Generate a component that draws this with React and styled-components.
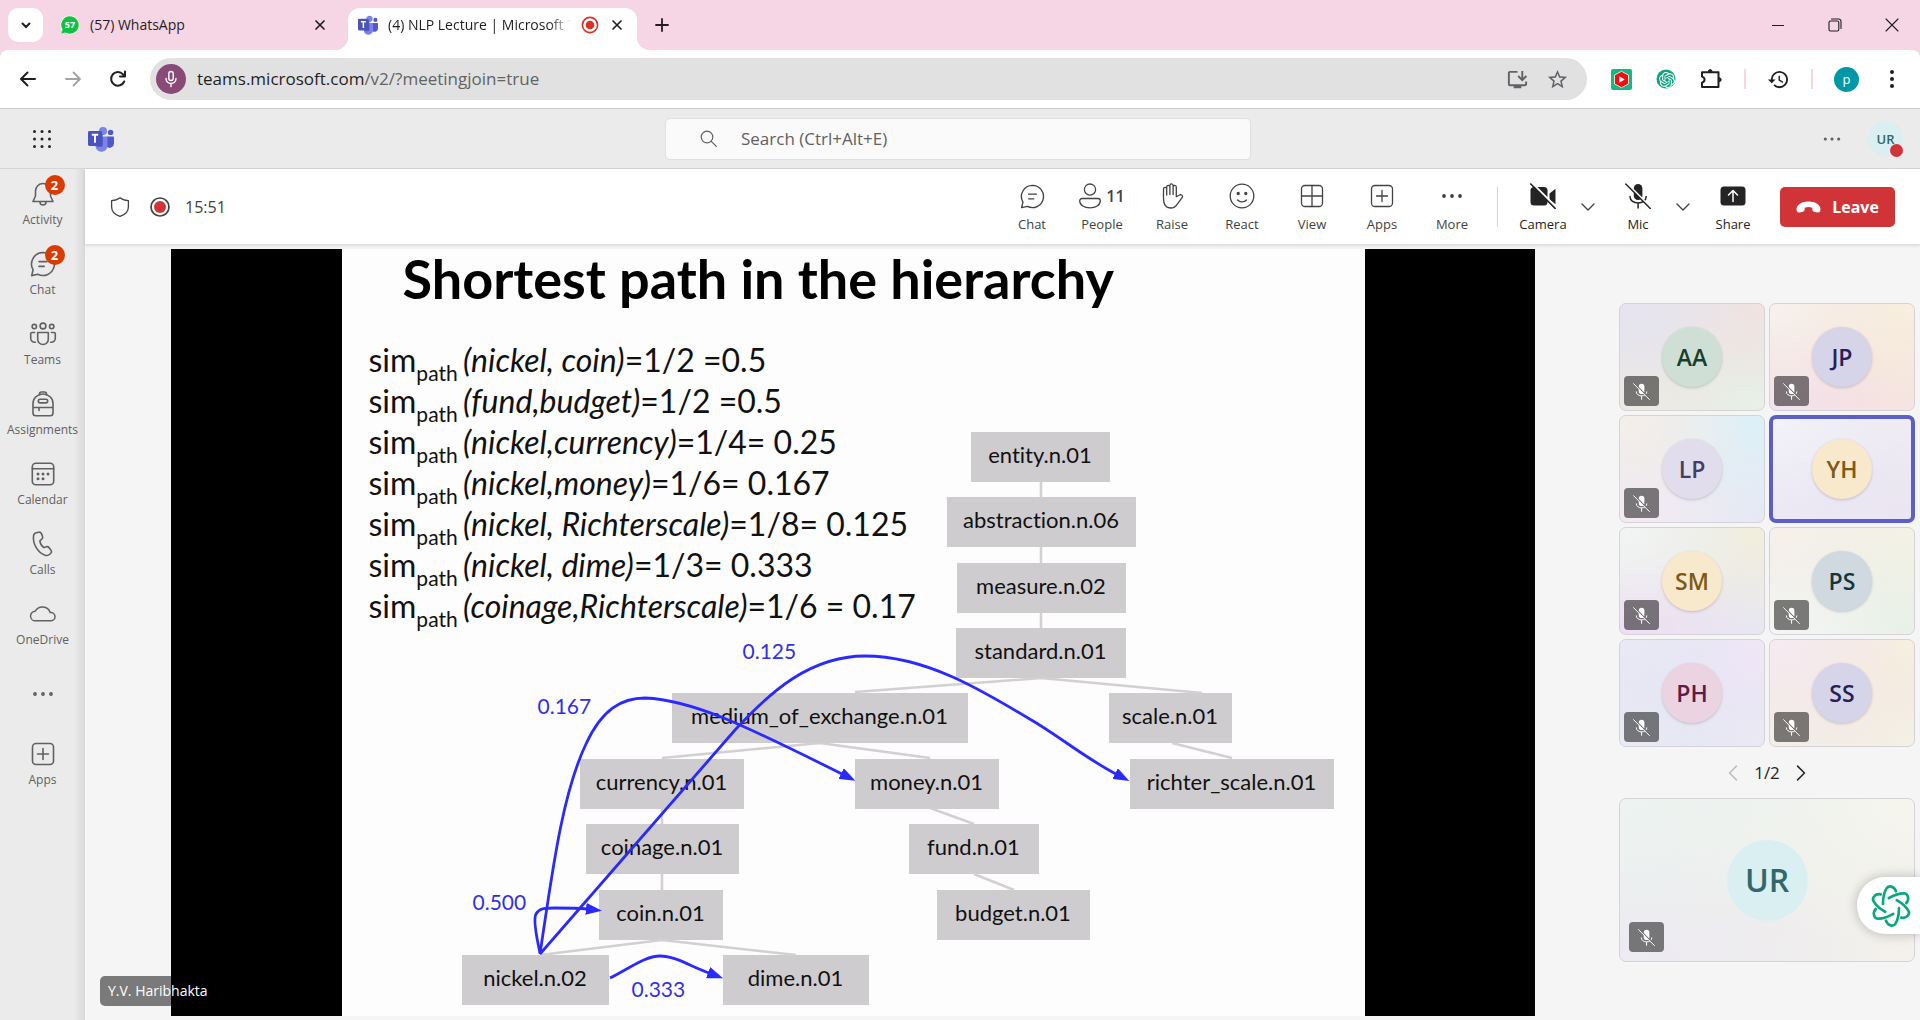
import React from 'react';
import styled, { createGlobalStyle, css } from 'styled-components';
import { SiOpenai } from 'react-icons/si';
import { MdOutlineInstallDesktop, MdStarBorder, MdHistory } from 'react-icons/md';

const GlobalStyle = createGlobalStyle`
  *, *::before, *::after { box-sizing: border-box; }
  body {
    margin: 0;
    background: #f5f5f5;
    font-family: 'Open Sans', 'Noto Sans', sans-serif;
    color: #242424;
  }
  button {
    font: inherit;
    color: inherit;
    border: 0;
    padding: 0;
    background: none;
    display: inline-flex;
    align-items: center;
    justify-content: center;
  }
  svg { display: block; flex: none; }
`;

const Page = styled.div`
  display: flex;
  flex-direction: column;
  height: 100vh;
  overflow: hidden;
`;

/* ---------- browser chrome ---------- */

const TabStrip = styled.header`
  display: flex;
  align-items: flex-end;
  height: 50px;
  padding-left: 8px;
  background: #f6d5e4;
  color: #1f1f1f;
`;

const TabSearch = styled.button`
  width: 35px;
  height: 34px;
  margin: 0 7px 8px 0;
  border-radius: 10px;
  background: #fff;
`;

const Tab = styled.div`
  position: relative;
  display: flex;
  align-items: center;
  gap: 10px;
  height: 42px;
  width: ${(p) => (p.$active ? 289 : 298)}px;
  padding: 0 ${(p) => (p.$active ? 12 : 20)}px 8px 10px;
  ${(p) =>
    p.$active &&
    css`
      background: #fff;
      border-radius: 12px 12px 0 0;
      &::before,
      &::after {
        content: '';
        position: absolute;
        bottom: 0;
        width: 14px;
        height: 14px;
      }
      &::before {
        left: -14px;
        background: radial-gradient(circle at 0 0, transparent 14px, #fff 15px);
      }
      &::after {
        right: -14px;
        background: radial-gradient(circle at 100% 0, transparent 14px, #fff 15px);
      }
    `}
`;

const TabTitle = styled.span`
  flex: 1;
  min-width: 0;
  overflow: hidden;
  white-space: nowrap;
  font-size: 14px;
  line-height: 20px;
  ${(p) => p.$fade && css`mask-image: linear-gradient(to right, #000 88%, transparent);`}
`;

const SmallButton = styled.button`
  width: 16px;
  height: 16px;
`;

const NewTab = styled.button`
  width: 34px;
  height: 34px;
  margin: 0 0 8px 8px;
`;

const WindowControls = styled.div`
  display: flex;
  align-self: stretch;
  margin-left: auto;
`;

const WindowButton = styled.button`
  width: 57px;
`;

const ToolbarBack = styled.div`
  background: #f6d5e4;
`;

const Toolbar = styled.div`
  display: flex;
  align-items: center;
  height: 59px;
  padding: 0 20px 0 12px;
  background: #fff;
  border-bottom: 1px solid #cbcbcb;
  border-radius: 8px 8px 0 0;
  color: #1f1f1f;
`;

const NavButton = styled.button`
  width: 32px;
  height: 32px;
  margin-right: 13px;
  color: ${(p) => (p.$muted ? '#a3a3a3' : '#1f1f1f')};
`;

const Omnibox = styled.div`
  display: flex;
  align-items: center;
  flex: 1;
  height: 42px;
  margin-left: 3px;
  padding: 0 18px 0 6px;
  border-radius: 21px;
  background: #e1e1e1;
  color: #5f6368;
`;

const MicChip = styled.button`
  width: 30px;
  height: 30px;
  margin-right: 11px;
  border-radius: 50%;
  background: #8a4a78;
  color: #fff;
`;

const Address = styled.div`
  flex: 1;
  font-size: 17px;
  line-height: 24px;
  color: #636363;
  b {
    font-weight: 400;
    color: #1f1f1f;
  }
`;

const OmniButton = styled.button`
  width: 24px;
  height: 24px;
  margin-left: 16px;
`;

const Extensions = styled.div`
  display: flex;
  align-items: center;
  padding-left: 22px;
`;

const ExtButton = styled.button`
  width: 24px;
  height: 24px;
  margin-right: 21px;
`;

const ToolbarRule = styled.span`
  width: 2px;
  height: 20px;
  margin-right: ${(p) => p.$gap}px;
  background: #f6d5e4;
`;

const ProfileDot = styled.button`
  width: 25px;
  height: 25px;
  margin-right: 25px;
  border-radius: 50%;
  background: #0097a7;
  color: #fff;
  font-size: 13px;
  line-height: 16px;
`;

/* ---------- teams header ---------- */

const AppHeader = styled.div`
  display: grid;
  grid-template-columns: 1fr 586px 1fr;
  align-items: center;
  height: 60px;
  padding: 0 17px 0 13px;
  background: #ebebeb;
  border-bottom: 1px solid #d6d6d6;
`;

const HeaderSide = styled.div`
  display: flex;
  align-items: center;
  gap: ${(p) => (p.$end ? 24 : 34)}px;
  padding-left: ${(p) => (p.$end ? 0 : 17)}px;
  justify-content: ${(p) => (p.$end ? 'flex-end' : 'flex-start')};
`;

const HeaderButton = styled.button`
  width: 24px;
  height: 24px;
  color: #616161;
`;

const SearchBox = styled.label`
  display: flex;
  align-items: center;
  gap: 24px;
  height: 42px;
  padding: 0 34px;
  border: 1px solid #e0e0e0;
  border-radius: 5px;
  background: #fafafa;
  color: #616161;
`;

const SearchInput = styled.input`
  flex: 1;
  min-width: 0;
  border: 0;
  padding: 0;
  background: none;
  outline: none;
  font: 17px/24px 'Open Sans', 'Noto Sans', sans-serif;
  &::placeholder { color: #616161; opacity: 1; }
`;

const Me = styled.button`
  position: relative;
  width: 35px;
  height: 35px;
  border-radius: 50%;
  background: #d9eff2;
  color: #33676a;
  font-size: 13px;
  font-weight: 600;
  &::after {
    content: '';
    position: absolute;
    right: 0;
    bottom: -1px;
    width: 13px;
    height: 13px;
    border-radius: 50%;
    background: #d13438;
  }
`;

/* ---------- body ---------- */

const Body = styled.div`
  display: flex;
  flex: 1;
  min-height: 0;
`;

const Rail = styled.nav`
  display: flex;
  flex-direction: column;
  width: 85px;
  padding-top: 7px;
  background: linear-gradient(to right, #ebebeb 74px, #d9d9d9);
`;

const RailItem = styled.button`
  flex-direction: column;
  justify-content: ${(p) => (p.$solo ? 'center' : 'flex-start')};
  gap: 4px;
  height: 70px;
  padding: ${(p) => (p.$solo ? '0 0 14px' : '4px 0 0')};
  color: #616161;
  font-size: 12px;
  line-height: 16px;
`;

const RailIcon = styled.span`
  position: relative;
  display: flex;
  height: 28px;
  align-items: center;
`;

const Badge = styled.span`
  position: absolute;
  left: 16px;
  top: -5px;
  width: 20px;
  height: 20px;
  border-radius: 50%;
  background: #da3b01;
  color: #fff;
  font-size: 13px;
  line-height: 20px;
  font-weight: 700;
  text-align: center;
`;

const Meeting = styled.main`
  display: flex;
  flex-direction: column;
  flex: 1;
  min-width: 0;
`;

const MeetingBar = styled.div`
  display: flex;
  align-items: center;
  height: 76px;
  padding: 0 25px;
  background: #fff;
  border-bottom: 1px solid #dedede;
  box-shadow: 0 1px 3px rgba(0, 0, 0, 0.1);
  color: #424242;
`;

const Status = styled.div`
  display: flex;
  align-items: center;
  gap: 15px;
  margin-right: auto;
  font-size: 16px;
  line-height: 24px;
`;

const ShieldBox = styled.span`
  width: 25px;
`;

const BarButton = styled.button`
  flex-direction: column;
  gap: 6px;
  width: 70px;
  padding-top: 3px;
  font-size: 13px;
  line-height: 18px;
  color: ${(p) => (p.$strong ? '#242424' : '#424242')};
`;

const BarIcon = styled.span`
  display: flex;
  align-items: center;
  gap: 5px;
  height: 26px;
  font-size: 16px;
  font-weight: 600;
`;

const BarRule = styled.span`
  width: 1px;
  height: 40px;
  margin: 0 10px;
  background: #d6d6d6;
`;

const Caret = styled.button`
  width: 20px;
  height: 40px;
  margin-right: 5px;
`;

const Leave = styled.button`
  gap: 11px;
  width: 115px;
  height: 40px;
  margin-left: 12px;
  border-radius: 5px;
  background: #d13438;
  color: #fff;
  font-size: 16px;
  font-weight: 700;
`;

const Content = styled.div`
  position: relative;
  display: flex;
  flex: 1;
  min-height: 0;
`;

const Stage = styled.section`
  flex: 1;
  min-width: 0;
  padding: 4px 84px 0 86px;
`;

const SharedScreen = styled.div`
  display: flex;
  justify-content: center;
  aspect-ratio: 1364 / 767;
  background: #000;
`;

const Slide = styled.article`
  position: relative;
  aspect-ratio: 1023 / 767;
  background: #fdfdfd;
  color: #111;
  font-family: Lato, 'Open Sans', sans-serif;
  font-variant-ligatures: none;
`;

const SlideTitle = styled.h1`
  margin: 0;
  padding-left: 61px;
  font-size: 54px;
  line-height: 60px;
  font-weight: 700;
  color: #000;
  white-space: nowrap;
`;

const Formulas = styled.ul`
  margin: 0;
  padding: 30px 0 0 27px;
  list-style: none;
`;

const Formula = styled.li`
  height: 41px;
  font-size: 32px;
  line-height: 41px;
  white-space: pre;
  sub {
    font-size: 21px;
    line-height: 0;
    vertical-align: -9px;
  }
`;

const Node = styled.span`
  position: absolute;
  left: ${(p) => p.$x}px;
  top: ${(p) => p.$y}px;
  width: ${(p) => p.$w}px;
  height: 50px;
  background: #cecccf;
  font-size: 22px;
  line-height: 46px;
  text-align: center;
  white-space: nowrap;
`;

const Score = styled.span`
  position: absolute;
  left: ${(p) => p.$x}px;
  top: ${(p) => p.$y}px;
  color: #3030e6;
  font-size: 21px;
  line-height: 26px;
`;

const Overlay = styled.svg`
  position: absolute;
  inset: 0;
  width: 100%;
  height: 100%;
`;

const NameTag = styled.span`
  position: absolute;
  left: 15px;
  bottom: 14px;
  padding: 0 8px;
  border-radius: 5px;
  background: rgba(0, 0, 0, 0.5);
  color: #fff;
  font-size: 14px;
  line-height: 30px;
`;

const People = styled.aside`
  display: flex;
  flex-direction: column;
  width: 301px;
  padding: 58px 5px 0 0;
`;

const Tiles = styled.div`
  display: grid;
  grid-template-columns: 1fr 1fr;
  gap: 4px;
`;

const Tile = styled.div`
  position: relative;
  display: flex;
  align-items: center;
  justify-content: center;
  height: ${(p) => (p.$large ? 164 : 108)}px;
  border-radius: 7px;
  border: 1px solid #d5d3d8;
  ${(p) => p.$speaking && css`border: 4px solid #5b5fc7;`}
  background: ${({ $tint: [tl, tr, bl, br, mid] }) => `
    radial-gradient(ellipse at 0 0, ${tl}, transparent 65%),
    radial-gradient(ellipse at 100% 0, ${tr}, transparent 65%),
    radial-gradient(ellipse at 0 100%, ${bl}, transparent 65%),
    radial-gradient(ellipse at 100% 100%, ${br}, transparent 65%),
    ${mid}`};
`;

const Avatar = styled.span`
  width: ${(p) => (p.$large ? 81 : 60)}px;
  height: ${(p) => (p.$large ? 81 : 60)}px;
  border-radius: 50%;
  background: ${(p) => p.$bg};
  color: ${(p) => p.$fg};
  font-size: ${(p) => (p.$large ? 32 : 23)}px;
  line-height: ${(p) => (p.$large ? 80 : 60)}px;
  font-weight: 600;
  text-align: center;
  box-shadow: ${(p) => (p.$large ? 'none' : '0 1px 3px rgba(0, 0, 0, 0.18)')};
`;

const Muted = styled.span`
  position: absolute;
  left: ${(p) => (p.$large ? 9 : 4)}px;
  bottom: ${(p) => (p.$large ? 9 : 4)}px;
  display: flex;
  align-items: center;
  justify-content: center;
  width: 35px;
  height: 30px;
  border-radius: 4px;
  background: rgba(0, 0, 0, 0.5);
  color: #fff;
`;

const Pager = styled.div`
  display: flex;
  align-items: center;
  justify-content: center;
  gap: 11px;
  height: 51px;
  font-size: 17px;
  line-height: 24px;
`;

const PagerButton = styled.button`
  width: 20px;
  height: 24px;
  color: ${(p) => (p.disabled ? '#bdbdbd' : '#242424')};
`;

const Assistant = styled.button`
  position: absolute;
  right: 0;
  bottom: 86px;
  width: 63px;
  height: 57px;
  padding-left: 5px;
  border-radius: 28px 0 0 28px;
  background: #fff;
  box-shadow: 0 0 12px rgba(0, 0, 0, 0.25);
`;

/* ---------- icons ---------- */

const Icon = ({ size = 20, box = 20, stroke = 1.2, children, ...rest }) => (
  <svg
    width={size}
    height={size}
    viewBox={`0 0 ${box} ${box}`}
    fill="none"
    stroke="currentColor"
    strokeWidth={stroke}
    strokeLinecap="round"
    strokeLinejoin="round"
    aria-hidden="true"
    {...rest}
  >
    {children}
  </svg>
);

const TeamsLogo = ({ size }) => (
  <svg width={size} height={size} viewBox="0 0 26 26" aria-hidden="true">
    <circle cx="15" cy="5" r="4" fill="#7b83eb" />
    <circle cx="22.6" cy="6.4" r="2.7" fill="#5059c9" />
    <path d="M19 10.500h6.200a.8.800 0 0 1 .8.800v6.200a4.500 4.500 0 0 1-7 3.600z" fill="#5059c9" />
    <path d="M9 10.500h10.500v8.500a6 6 0 0 1-12 1.500z" fill="#7b83eb" />
    <path d="M9 8h6v11a2 2 0 0 1-2 2H9z" fill="#3b429b" opacity=".55" />
    <rect x="0" y="5" width="14" height="15" rx="1.400" fill="#4b53bc" />
    <path d="M3.800 8.800h6.400M7 8.800v8" stroke="#fff" strokeWidth="1.900" />
  </svg>
);

const CloseGlyph = () => (
  <Icon size={12} box={12} stroke={1.7}>
    <path d="M2 2l8 8M10 2l-8 8" />
  </Icon>
);

const Puzzle = () => (
  <Icon size={24} box={24} stroke={2}>
    <path d="M3 5.200h16.500v14.800H3v-4.400c3.400-.8 3.400-5.200 0-6z" />
    <path d="M9.300 4.500a1.900 1.900 0 0 1 3.800 0zM20.300 10.800a1.900 1.900 0 0 1 0 3.800z" fill="currentColor" stroke="currentColor" strokeWidth="1" />
  </Icon>
);

const Bell = () => (
  <Icon size={28} box={28} stroke={1.6}>
    <path d="M14 3.500a7.500 7.500 0 0 0-7.500 7.500v5L4 21.500h20L21.500 16v-5A7.500 7.500 0 0 0 14 3.500zM11 22a3 3 0 0 0 6 0" />
  </Icon>
);

const ChatBubble = ({ size = 28, stroke = 1.6 }) => (
  <Icon size={size} box={28} stroke={stroke}>
    <path d="M14 2.500A11.500 11.500 0 1 1 8.800 24.300L2.700 25.600l1.400-5.800A11.500 11.500 0 0 1 14 2.500zM10 11.600h8M10 16.400h5.200" />
  </Icon>
);

const TeamsGlyph = () => (
  <Icon size={28} box={28} stroke={1.6}>
    <circle cx="14" cy="6" r="2.900" />
    <circle cx="5.300" cy="6.600" r="2.200" />
    <circle cx="22.700" cy="6.600" r="2.200" />
    <path d="M8.700 12.500h10.600v6.700a5.300 5.300 0 0 1-10.600 0zM5.600 12.500H3a1.300 1.300 0 0 0-1.300 1.300v4.400a4 4 0 0 0 4.700 4M22.400 12.500H25a1.300 1.300 0 0 1 1.300 1.300v4.400a4 4 0 0 1-4.700 4" />
  </Icon>
);

const Backpack = () => (
  <Icon size={28} box={28} stroke={1.6}>
    <path d="M10.500 5V4a2 2 0 0 1 2-2h3a2 2 0 0 1 2 2v1M4 13.500a10 9.500 0 0 1 20 0V23a2.800 2.800 0 0 1-2.800 2.800H6.800A2.800 2.800 0 0 1 4 23zM4 17.500h20M10 17.500v3" />
    <rect x="9.300" y="9.300" width="9.400" height="3.600" rx="1.800" />
  </Icon>
);

const CalendarGlyph = () => (
  <Icon size={28} box={28} stroke={1.6}>
    <rect x="3.300" y="3.300" width="21.400" height="21.400" rx="3.500" />
    <path d="M3.300 8.800h21.400" />
    <g fill="currentColor" stroke="none">
      <circle cx="9" cy="14" r="1.500" />
      <circle cx="14" cy="14" r="1.500" />
      <circle cx="19" cy="14" r="1.500" />
      <circle cx="9" cy="18.800" r="1.500" />
      <circle cx="14" cy="18.800" r="1.500" />
    </g>
  </Icon>
);

const Phone = () => (
  <Icon size={28} box={28} stroke={1.6}>
    <path d="M7.800 2.600l1.800-.4c1.100-.3 2.200.2 2.700 1.200l1.200 2.900c.4 1 .2 2-.6 2.700l-2 1.900c.2 2.500 1.800 5.200 3.900 6.700l2.700-.8c1-.3 2 .1 2.600.9l1.900 2.600c.7.900.6 2.100-.2 2.900l-.8.800c-1.300 1.300-3.200 1.800-5 1.200-7.700-2.600-12.700-12.200-11.400-19.700.3-1.500 1.600-2.700 3.200-3z" />
  </Icon>
);

const Cloud = () => (
  <Icon size={28} box={28} stroke={1.500}>
    <path d="M6.500 20.800a4.800 4.800 0 0 1-.3-9.600 8.200 8.200 0 0 1 15 1.300A4.200 4.200 0 0 1 22.500 20.800z" />
  </Icon>
);

const Dots = ({ size = 24 }) => (
  <Icon size={size} box={24} stroke={0}>
    <g fill="currentColor">
      <circle cx="4" cy="12" r="1.900" />
      <circle cx="12" cy="12" r="1.900" />
      <circle cx="20" cy="12" r="1.900" />
    </g>
  </Icon>
);

const PlusBox = ({ stroke = 1.5 }) => (
  <Icon size={26} box={26} stroke={stroke}>
    <rect x="2.500" y="2.500" width="21" height="21" rx="3.500" />
    <path d="M13 7.500v11M7.500 13h11" />
  </Icon>
);

const ViewGrid = () => (
  <Icon size={26} box={26} stroke={1.3}>
    <rect x="2.500" y="2.500" width="21" height="21" rx="3.500" />
    <path d="M13 2.500v21M2.500 13h21" />
  </Icon>
);

const PersonGlyph = () => (
  <Icon width={22} size={26} box={26} viewBox="2 0 22 26" stroke={1.3}>
    <circle cx="13" cy="6.600" r="5.600" />
    <path d="M5 15.500h16a2.300 2.300 0 0 1 2.300 2.300c0 4.700-4.800 7-10.300 7s-10.300-2.300-10.300-7A2.300 2.300 0 0 1 5 15.500z" />
  </Icon>
);

const Hand = () => (
  <Icon size={26} box={26} stroke={1.3}>
    <path d="M4.500 15.500V6a1.500 1.500 0 0 1 3.200 0v-2a1.600 1.600 0 0 1 3.200 0V2.500a1.600 1.600 0 0 1 3.200 0V4a1.600 1.600 0 0 1 3.200 0v9.700l3.200-1.700c1.100-.6 2.700-.1 3 1.200.1.500 0 .9-.3 1.200l-4.700 6.400c-1.800 2.800-3.500 4.200-7 4.200-5.800 0-7-4.500-7-9.500zM7.700 6v6M10.900 4v7.500M14.100 4v7.500" />
  </Icon>
);

const Smile = () => (
  <Icon size={26} box={26} stroke={1.3}>
    <circle cx="13" cy="13" r="11.800" />
    <path d="M8.500 17c2.400 2.600 6.600 2.600 9 0" />
    <circle cx="9.200" cy="10.500" r="1" fill="currentColor" />
    <circle cx="16.800" cy="10.500" r="1" fill="currentColor" />
  </Icon>
);

const CameraOff = () => (
  <Icon size={26} box={26} stroke={1.3}>
    <rect x="0.500" y="4" width="17" height="18.500" rx="3.500" fill="currentColor" stroke="none" />
    <path d="M19.500 10.500l6-4.800v15.500l-6-4.800z" fill="currentColor" stroke="none" />
    <path d="M2.500 .5l25 25" stroke="#fff" strokeWidth="2" />
    <path d="M.8 1l24.500 24.500" strokeWidth="1.700" />
  </Icon>
);

const MicOff = ({ size = 26, cut = '#fff' }) => (
  <Icon size={size} box={26} stroke={1.5}>
    <rect x="8.800" y="1" width="8.600" height="16" rx="4.300" fill="currentColor" stroke="none" />
    <path d="M5 13.500c0 8.500 16.200 8.500 16.200 0M13.100 20v5" />
    <path d="M2.500 1l24 24" stroke={cut} strokeWidth="1.800" />
    <path d="M.8 1l24.500 24.500" />
  </Icon>
);

const ShareGlyph = () => (
  <Icon size={26} box={26} stroke={1.5}>
    <rect x="0.500" y="3.500" width="25" height="19" rx="3.500" fill="currentColor" stroke="none" />
    <path d="M13 18.500V8M8.500 12L13 7.500l4.500 4.500" stroke="#fff" />
  </Icon>
);

const Chevron = ({ d, w = 14, h = 14, stroke = 1.3 }) => (
  <svg width={w} height={h} viewBox="0 0 14 14" fill="none" stroke="currentColor" strokeWidth={stroke} strokeLinecap="round" aria-hidden="true">
    <path d={d} />
  </svg>
);

/* ---------- data ---------- */

const RAIL = [
  { label: 'Activity', icon: <Bell />, badge: 2 },
  { label: 'Chat', icon: <ChatBubble />, badge: 2 },
  { label: 'Teams', icon: <TeamsGlyph /> },
  { label: 'Assignments', icon: <Backpack /> },
  { label: 'Calendar', icon: <CalendarGlyph /> },
  { label: 'Calls', icon: <Phone /> },
  { label: 'OneDrive', icon: <Cloud /> },
  { icon: <Dots />, name: 'More apps' },
  { label: 'Apps', icon: <PlusBox stroke={1.6} /> },
];

const ACTIONS = [
  { label: 'Chat', icon: <ChatBubble size={27} stroke={1.4} /> },
  { label: 'People', icon: <PersonGlyph />, count: 11 },
  { label: 'Raise', icon: <Hand /> },
  { label: 'React', icon: <Smile /> },
  { label: 'View', icon: <ViewGrid /> },
  { label: 'Apps', icon: <PlusBox stroke={1.3} /> },
  { label: 'More', icon: <Dots /> },
];

const FORMULAS = [
  ['(nickel, coin)', '=1/2 =0.5'],
  ['(fund,budget)', '=1/2 =0.5'],
  ['(nickel,currency)', '=1/4= 0.25'],
  ['(nickel,money)', '=1/6= 0.167'],
  ['(nickel, Richterscale)', '=1/8= 0.125'],
  ['(nickel, dime)', '=1/3= 0.333'],
  ['(coinage,Richterscale)', '=1/6 = 0.17'],
];

const NODES = [
  ['entity.n.01', 629, 183, 139],
  ['abstraction.n.06', 605, 248, 189],
  ['measure.n.02', 615, 314, 169],
  ['standard.n.01', 614, 379, 170],
  ['medium_of_exchange.n.01', 330, 444, 296],
  ['scale.n.01', 767, 444, 123],
  ['currency.n.01', 238, 510, 164],
  ['money.n.01', 513, 510, 144],
  ['richter_scale.n.01', 788, 510, 204],
  ['coinage.n.01', 244, 575, 153],
  ['fund.n.01', 567, 575, 130],
  ['coin.n.01', 257, 641, 124],
  ['budget.n.01', 595, 641, 153],
  ['nickel.n.02', 120, 706, 147],
  ['dime.n.01', 381, 706, 146],
];

const EDGES =
  'M699 233v15M699 298v16M699 364v15M699 429L513 443M699 429L860 444M478 494L320 509M478 494L588 509M830 494L890 509M588 559L632 575M632 625L672 641M320 560v15M320 625v16M320 691L198 706M320 691L454 706';

const ARROWS = [
  'M198 705C210 625 220 545 244 495C260 460 280 449 303 449C350 451 400 475 500 525',
  'M198 705L393 481C428 443 468 407 523 407C583 407 638 440 691 472C718 488 745 510 774 525',
  'M198 704C194 686 191 670 194 665C197 659 203 659 213 659C228 659 236 659 245 660',
  'M268 729C288 719 303 707 318 707C333 707 348 717 367 724',
];

const SCORES = [
  ['0.125', 401, 389],
  ['0.167', 196, 444],
  ['0.500', 131, 640],
  ['0.333', 290, 727],
];

const PEOPLE = [
  { id: 'AA', bg: '#cfdfd5', fg: '#17402b', tint: ['#e6e3f1', '#f1e3e1', '#edeae3', '#e7f1e8', '#e7e7e5'], muted: true },
  { id: 'JP', bg: '#d6d4e8', fg: '#272057', tint: ['#f6f2ee', '#f7f0df', '#f3e1f0', '#f5e5e2', '#f6e1d8'], muted: true },
  { id: 'LP', bg: '#e1ddec', fg: '#463d62', tint: ['#f5efe9', '#dbf0f8', '#f4eaf4', '#e6e9f6', '#e9eaee'], muted: true },
  { id: 'YH', bg: '#f8e9cd', fg: '#7e5a14', tint: ['#f4f3f8', '#efecf3', '#ece9f4', '#ebe6f1', '#e7e4f3'], speaking: true },
  { id: 'SM', bg: '#f8e9cd', fg: '#7e5a14', tint: ['#f2f5f3', '#f1eedc', '#f0ddf5', '#e8e7f2', '#e9e9ea'], muted: true },
  { id: 'PS', bg: '#cfd9df', fg: '#17343c', tint: ['#f7f0ea', '#f4f2e4', '#f5f6f4', '#e8f2e8', '#ebeeea'], muted: true },
  { id: 'PH', bg: '#ebd3e1', fg: '#5c1c46', tint: ['#e9eaf5', '#f0e7f6', '#e9ebf5', '#eaeaf4', '#e3e1f3'], muted: true },
  { id: 'SS', bg: '#d6d4e8', fg: '#272057', tint: ['#f6ecf1', '#f7f0df', '#f3f0e8', '#f4f2e4', '#f2e2e4'], muted: true },
];

const SELF_TINT = ['#edf3f1', '#f6f5ee', '#edeaf3', '#f4f1ec', '#eceeea'];

/* ---------- sections ---------- */

function BrowserTabs() {
  return (
    <TabStrip>
      <TabSearch aria-label="Search tabs">
        <Chevron d="M3.500 5.500L7 9l3.500-3.500" stroke={2} />
      </TabSearch>
      <Tab>
        <svg width="20" height="20" viewBox="0 0 20 20" aria-hidden="true">
          <circle cx="10" cy="10" r="9.500" fill="#fff" />
          <path d="M10 1.300a8.700 8.700 0 1 1-4.400 16.200L1.400 18.600l1.200-4A8.700 8.700 0 0 1 10 1.300z" fill="#0fc243" />
          <text x="10" y="13" fontSize="9" fontWeight="700" textAnchor="middle" fill="#fff">57</text>
        </svg>
        <TabTitle>(57) WhatsApp</TabTitle>
        <SmallButton aria-label="Close tab"><CloseGlyph /></SmallButton>
      </Tab>
      <Tab $active>
        <TeamsLogo size={20} />
        <TabTitle $fade>(4) NLP Lecture | Microsoft T</TabTitle>
        <svg width="18" height="18" viewBox="0 0 18 18" fill="none" aria-hidden="true">
          <circle cx="9" cy="9" r="7.600" stroke="#d93025" strokeWidth="1.600" />
          <circle cx="9" cy="9" r="4.300" fill="#d93025" />
        </svg>
        <SmallButton aria-label="Close tab"><CloseGlyph /></SmallButton>
      </Tab>
      <NewTab aria-label="New tab">
        <Icon size={14} box={14} stroke={1.8}><path d="M7 1v12M1 7h12" /></Icon>
      </NewTab>
      <WindowControls>
        <WindowButton aria-label="Minimize">
          <Icon size={14} box={14} stroke={1} shapeRendering="crispEdges"><path d="M1 7.500h12" /></Icon>
        </WindowButton>
        <WindowButton aria-label="Restore">
          <Icon size={14} box={14} stroke={1.1}>
            <rect x="1" y="3" width="9.800" height="10" rx="1.500" />
            <path d="M3.500 1h7a2.500 2.500 0 0 1 2.500 2.500v7" />
          </Icon>
        </WindowButton>
        <WindowButton aria-label="Close">
          <Icon size={14} box={14} stroke={1.1}><path d="M1 1l12 12M13 1L1 13" /></Icon>
        </WindowButton>
      </WindowControls>
    </TabStrip>
  );
}

function BrowserToolbar() {
  return (
    <ToolbarBack>
      <Toolbar>
        <NavButton aria-label="Back">
          <Icon size={20} stroke={2}><path d="M17 10H3.500M9.500 3.500L3 10l6.500 6.500" /></Icon>
        </NavButton>
        <NavButton $muted aria-label="Forward">
          <Icon size={20} stroke={1.8}><path d="M3 10h13.500M10.500 3.500L17 10l-6.500 6.500" /></Icon>
        </NavButton>
        <NavButton aria-label="Reload">
          <Icon size={20} stroke={2}><path d="M16.200 12.500A6.800 6.800 0 1 1 15 5.300l1.800 1.900M17 2.500v5h-5" /></Icon>
        </NavButton>
        <Omnibox>
          <MicChip aria-label="Microphone in use">
            <Icon size={18} box={18} stroke={1.4}>
              <rect x="6.800" y="1.500" width="4.400" height="9" rx="2.200" />
              <path d="M4 8.500c0 6.500 10 6.500 10 0M9 13.500V16.500" />
            </Icon>
          </MicChip>
          <Address role="textbox" aria-label="Address"><b>teams.microsoft.com</b>/v2/?meetingjoin=true</Address>
          <OmniButton aria-label="Install"><MdOutlineInstallDesktop size={23} /></OmniButton>
          <OmniButton aria-label="Bookmark"><MdStarBorder size={23} /></OmniButton>
        </Omnibox>
        <Extensions>
          <ExtButton aria-label="Video extension">
            <svg width="21" height="21" viewBox="0 0 21 21" aria-hidden="true">
              <rect width="21" height="21" rx="2" fill="#12b886" />
              <path d="M10.500 2.300l7 3.800v8.800l-7 3.800-7-3.800V6.100z" fill="#f00f0f" stroke="#fff" strokeWidth=".8" />
              <path d="M8.300 7.200l5.400 3.300-5.400 3.300z" fill="#fff" />
            </svg>
          </ExtButton>
          <ExtButton aria-label="Assistant extension">
            <svg width="20" height="20" viewBox="0 0 20 20" aria-hidden="true">
              <circle cx="10" cy="10" r="9.500" fill="#10a37f" />
              <SiOpenai x="3" y="3" width="14" height="14" color="#fff" />
            </svg>
          </ExtButton>
          <ExtButton aria-label="Extensions"><Puzzle /></ExtButton>
          <ToolbarRule $gap={20} />
          <ExtButton aria-label="History"><MdHistory size={23} /></ExtButton>
          <ToolbarRule $gap={21} />
          <ProfileDot aria-label="Profile">p</ProfileDot>
          <SmallButton aria-label="Browser menu">
            <svg width="6" height="20" viewBox="0 0 6 20" fill="currentColor" aria-hidden="true">
              <circle cx="3" cy="3" r="2" />
              <circle cx="3" cy="10" r="2" />
              <circle cx="3" cy="17" r="2" />
            </svg>
          </SmallButton>
        </Extensions>
      </Toolbar>
    </ToolbarBack>
  );
}

function TeamsHeader() {
  return (
    <AppHeader>
      <HeaderSide>
        <HeaderButton aria-label="App launcher">
          <svg width="20" height="20" viewBox="0 0 20 20" fill="#242424" aria-hidden="true">
            {[2.5, 10, 17.5].map((y) => [2.5, 10, 17.5].map((x) => <circle key={`${x}-${y}`} cx={x} cy={y} r="1.500" />))}
          </svg>
        </HeaderButton>
        <TeamsLogo size={26} />
      </HeaderSide>
      <SearchBox>
        <Icon size={17} box={17} stroke={1.2}>
          <circle cx="7" cy="7" r="5.800" />
          <path d="M11.300 11.300l5 5" />
        </Icon>
        <SearchInput aria-label="Search" placeholder="Search (Ctrl+Alt+E)" />
      </SearchBox>
      <HeaderSide $end>
        <HeaderButton aria-label="Settings and more"><Dots size={20} /></HeaderButton>
        <Me>UR</Me>
      </HeaderSide>
    </AppHeader>
  );
}

function SideRail() {
  return (
    <Rail>
      {RAIL.map((item) => (
        <RailItem key={item.label || item.name} $solo={!item.label} aria-label={item.label || item.name}>
          <RailIcon>
            {item.icon}
            {item.badge && <Badge>{item.badge}</Badge>}
          </RailIcon>
          {item.label}
        </RailItem>
      ))}
    </Rail>
  );
}

function MeetingControls() {
  return (
    <MeetingBar>
      <Status>
        <ShieldBox>
          <Icon size={20} box={20} stroke={1.3}>
            <path d="M10 .8c2.300 1.900 5.200 2.900 8.400 2.900v6c0 4.900-3 8-8.400 9.700-5.400-1.700-8.400-4.800-8.400-9.700v-6C4.800 3.700 7.700 2.700 10 .8z" />
          </Icon>
        </ShieldBox>
        <svg width="20" height="20" viewBox="0 0 20 20" fill="none" aria-hidden="true">
          <circle cx="10" cy="10" r="9" stroke="#424242" strokeWidth="1.700" />
          <circle cx="10" cy="10" r="6" fill="#d13438" />
        </svg>
        15:51
      </Status>
      {ACTIONS.map((a) => (
        <BarButton key={a.label}>
          <BarIcon>
            {a.icon}
            {a.count}
          </BarIcon>
          {a.label}
        </BarButton>
      ))}
      <BarRule />
      <BarButton $strong>
        <BarIcon><CameraOff /></BarIcon>
        Camera
      </BarButton>
      <Caret aria-label="Camera options"><Chevron d="M1 4l6 6 6-6" /></Caret>
      <BarButton $strong>
        <BarIcon><MicOff /></BarIcon>
        Mic
      </BarButton>
      <Caret aria-label="Mic options"><Chevron d="M1 4l6 6 6-6" /></Caret>
      <BarButton $strong>
        <BarIcon><ShareGlyph /></BarIcon>
        Share
      </BarButton>
      <Leave>
        <svg width="25" height="12" viewBox="0 0 25 12" fill="#fff" aria-hidden="true">
          <path d="M12.500.5c7 0 12 3.500 12 7.700 0 2-.9 3.500-2.600 3.300l-3.400-.6c-1.300-.2-2-1-2.100-2.300l-.2-1.900c-2.200-.8-5.200-.8-7.400 0l-.2 1.900c-.1 1.300-.8 2.100-2.100 2.300l-3.400.6C1.400 11.700.5 10.200.5 8.200.5 4 5.500.5 12.500.5z" />
        </svg>
        Leave
      </Leave>
    </MeetingBar>
  );
}

function LectureSlide() {
  return (
    <Slide>
      <SlideTitle>Shortest path in the hierarchy</SlideTitle>
      <Formulas>
        {FORMULAS.map(([args, value]) => (
          <Formula key={args}>
            sim<sub>path </sub><i>{args}</i>{value}
          </Formula>
        ))}
      </Formulas>
      {NODES.map(([name, x, y, w]) => (
        <Node key={name} $x={x} $y={y} $w={w}>{name}</Node>
      ))}
      {SCORES.map(([value, x, y]) => (
        <Score key={value} $x={x} $y={y}>{value}</Score>
      ))}
      <Overlay viewBox="0 0 1023 767" fill="none" aria-hidden="true">
        <defs>
          <marker id="tip" markerUnits="userSpaceOnUse" markerWidth="16" markerHeight="12" refX="1" refY="6" orient="auto">
            <path d="M0 0l16 6-16 6z" fill="#2a2aff" />
          </marker>
        </defs>
        <path d={EDGES} stroke="#d2d0d1" strokeWidth="2.500" />
        {ARROWS.map((d) => (
          <path key={d} d={d} stroke="#2a2aff" strokeWidth="2.800" markerEnd="url(#tip)" />
        ))}
      </Overlay>
    </Slide>
  );
}

function Participants() {
  return (
    <People>
      <Tiles>
        {PEOPLE.map((p) => (
          <Tile key={p.id} $tint={p.tint} $speaking={p.speaking}>
            <Avatar $bg={p.bg} $fg={p.fg}>{p.id}</Avatar>
            {p.muted && <Muted><MicOff size={17} cut="#747174" /></Muted>}
          </Tile>
        ))}
      </Tiles>
      <Pager>
        <PagerButton disabled aria-label="Previous page"><Chevron w={16} h={16} d="M10 1L4 7l6 6" /></PagerButton>
        1/2
        <PagerButton aria-label="Next page"><Chevron w={16} h={16} d="M4 1l6 6-6 6" /></PagerButton>
      </Pager>
      <Tile $large $tint={SELF_TINT}>
        <Avatar $large $bg="#daeff2" $fg="#33676a">UR</Avatar>
        <Muted $large><MicOff size={17} cut="#747174" /></Muted>
      </Tile>
    </People>
  );
}

export default function App() {
  return (
    <Page>
      <GlobalStyle />
      <BrowserTabs />
      <BrowserToolbar />
      <TeamsHeader />
      <Body>
        <SideRail />
        <Meeting>
          <MeetingControls />
          <Content>
            <Stage>
              <SharedScreen>
                <LectureSlide />
              </SharedScreen>
            </Stage>
            <Participants />
            <NameTag>Y.V. Haribhakta</NameTag>
            <Assistant aria-label="Open assistant">
              <svg width="42" height="42" viewBox="-63 -63 126 126" fill="none" stroke="#0aa77f" strokeWidth="8" strokeLinecap="round" aria-hidden="true">
                {[0, 60, 120, 180, 240, 300].map((a) => (
                  <path key={a} transform={`rotate(${a})`} d="M15-44C10-60-8-63-14-52C-21-40-24-24-24-6" />
                ))}
              </svg>
            </Assistant>
          </Content>
        </Meeting>
      </Body>
    </Page>
  );
}
